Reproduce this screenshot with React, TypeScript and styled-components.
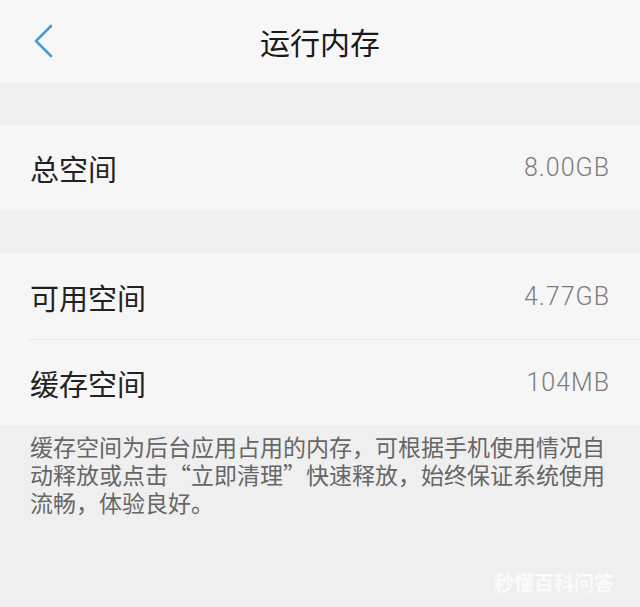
import React from 'react';
import styled, { createGlobalStyle } from 'styled-components';

const GlobalStyle = createGlobalStyle`
  html, body {
    margin: 0;
    padding: 0;
    background-color: #efefef;
  }
  body {
    font-family: "Noto Sans CJK SC", "Noto Sans", sans-serif;
  }
`;

const Page = styled.div`
  width: 640px;
  height: 607px;
  background-color: #efefef;
  display: flex;
  flex-direction: column;
  overflow: hidden;
`;

const Header = styled.header`
  height: 82px;
  background-color: #f7f7f7;
  display: flex;
  align-items: center;
  justify-content: center;
  position: relative;
`;

const BackButton = styled.button`
  position: absolute;
  left: 32px;
  top: 23px;
  width: 22px;
  height: 36px;
  padding: 0;
  border: none;
  background: none;
  display: flex;
  align-items: center;
  justify-content: center;
`;

const Title = styled.h1`
  margin: 0;
  font-size: 30px;
  font-weight: 400;
  color: #1a1a1a;
`;

const Gap = styled.div`
  height: 43px;
  background-color: #f0f0f0;
`;

const Group = styled.section`
  background-color: #f6f6f6;
`;

const Row = styled.div<{ $height: number; $divider?: boolean }>`
  height: ${p => p.$height}px;
  display: flex;
  align-items: center;
  justify-content: space-between;
  padding: 0 30px;
  position: relative;

  ${p =>
    p.$divider &&
    `
    &::after {
      content: '';
      position: absolute;
      left: 28px;
      right: 0;
      bottom: 0;
      height: 1px;
      background-color: #e6e6e6;
    }
  `}
`;

const Label = styled.span`
  font-size: 29px;
  color: #222;
`;

const Value = styled.span`
  font-family: Roboto, "Noto Sans", sans-serif;
  font-weight: 300;
  font-size: 25px;
  letter-spacing: 1px;
  color: #7c7c7c;
`;

const Note = styled.p`
  margin: 0;
  padding: 7px 30px 0 30px;
  font-size: 23px;
  line-height: 28px;
  color: #666;
`;

const Footer = styled.div`
  flex: 1;
  display: flex;
  align-items: flex-end;
  justify-content: flex-end;
  padding: 0 26px 10px 0;
`;

const Watermark = styled.span`
  font-size: 20px;
  font-weight: 700;
  color: #fbfbfb;
`;

const ChevronLeft = () => (
  <svg width="22" height="36" viewBox="0 0 22 36" fill="none">
    <path d="M19 3 L4 18 L19 33" stroke="#4b9ad4" strokeWidth="2.6" strokeLinecap="round" strokeLinejoin="round" />
  </svg>
);

const App: React.FC = () => (
  <Page>
    <GlobalStyle />
    <Header>
      <BackButton>
        <ChevronLeft />
      </BackButton>
      <Title>运行内存</Title>
    </Header>
    <Gap />
    <Group>
      <Row $height={85}>
        <Label>总空间</Label>
        <Value>8.00GB</Value>
      </Row>
    </Group>
    <Gap />
    <Group>
      <Row $height={87} $divider>
        <Label>可用空间</Label>
        <Value>4.77GB</Value>
      </Row>
      <Row $height={85}>
        <Label>缓存空间</Label>
        <Value>104MB</Value>
      </Row>
    </Group>
    <Note>
      缓存空间为后台应用占用的内存，可根据手机使用情况自动释放或点击“立即清理”快速释放，始终保证系统使用流畅，体验良好。
    </Note>
    <Footer>
      <Watermark>秒懂百科问答</Watermark>
    </Footer>
  </Page>
);

export default App;
